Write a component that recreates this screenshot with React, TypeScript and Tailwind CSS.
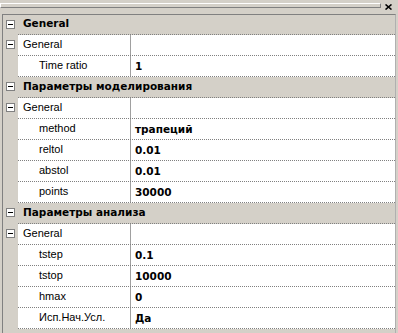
import React from "react";

type Row =
  | { kind: "category"; label: string }
  | { kind: "group"; label: string }
  | { kind: "prop"; name: string; value: string };

const rows: Row[] = [
  { kind: "category", label: "General" },
  { kind: "group", label: "General" },
  { kind: "prop", name: "Time ratio", value: "1" },
  { kind: "category", label: "Параметры моделирования" },
  { kind: "group", label: "General" },
  { kind: "prop", name: "method", value: "трапеций" },
  { kind: "prop", name: "reltol", value: "0.01" },
  { kind: "prop", name: "abstol", value: "0.01" },
  { kind: "prop", name: "points", value: "30000" },
  { kind: "category", label: "Параметры анализа" },
  { kind: "group", label: "General" },
  { kind: "prop", name: "tstep", value: "0.1" },
  { kind: "prop", name: "tstop", value: "10000" },
  { kind: "prop", name: "hmax", value: "0" },
  { kind: "prop", name: "Исп.Нач.Усл.", value: "Да" },
];

// bold text in the source is Tahoma Bold, DejaVu Sans Bold is closest in width
const boldFont = { fontFamily: '"DejaVu Sans", Verdana, sans-serif' };

function MinusBox() {
  return (
    <div className="w-[9px] h-[9px] border border-[#808080] bg-white flex items-center justify-center">
      <div className="w-[5px] h-[1px] bg-black" />
    </div>
  );
}

function PropRow({ row, first }: { row: Row; first: boolean }) {
  const h = first ? "h-[20px]" : "h-[21px]";
  if (row.kind === "category") {
    return (
      <div className={`flex ${h}`}>
        <div className="w-[15px] flex items-center justify-center pb-[2px]">
          <MinusBox />
        </div>
        <div
          className="flex-1 flex items-center pl-[5px] pb-[1px] font-bold text-[10.5px] border-b border-dotted border-[#808080]"
          style={boldFont}
        >
          {row.label}
        </div>
      </div>
    );
  }
  if (row.kind === "group") {
    return (
      <div className={`flex ${h}`}>
        <div className="w-[15px] flex items-center justify-center pb-[2px]">
          <MinusBox />
        </div>
        <div className="flex-1 flex bg-white border-b border-dotted border-[#808080]">
          <div className="w-[113px] flex items-center pl-[5px] pb-[1px] border-r border-r-solid border-[#a0a0a0]">
            {row.label}
          </div>
          <div className="flex-1" />
        </div>
      </div>
    );
  }
  return (
    <div className={`flex ${h}`}>
      <div className="w-[15px]" />
      <div className="flex-1 flex bg-white border-b border-dotted border-[#808080]">
        <div className="w-[113px] flex items-center pl-[21px] pb-[1px] border-r border-r-solid border-[#a0a0a0]">
          {row.name}
        </div>
        <div
          className="flex-1 flex items-center pl-[4px] pt-[1px] font-bold text-[10.5px]"
          style={boldFont}
        >
          {row.value}
        </div>
      </div>
    </div>
  );
}

export default function App() {
  return (
    <div
      className="w-[398px] h-[333px] bg-[#d4d0c8] overflow-hidden text-[11px] text-black"
      style={{ fontFamily: '"Liberation Sans", Arial, sans-serif' }}
    >
      <div className="h-[14px] flex items-start pt-[3px]">
        <div className="w-[381px] h-[5px] border border-t-white border-l-white border-b-[#808080] border-r-[#808080]" />
        <div className="flex-1 flex justify-center pt-[1px] pr-[2px]">
          <svg width="7" height="6" viewBox="0 0 7 6">
            <path d="M0.5 0.5 L6.5 5.5 M6.5 0.5 L0.5 5.5" stroke="black" strokeWidth="1.6" />
          </svg>
        </div>
      </div>
      <div className="ml-[2px] mr-[2px] h-[319px] border-l border-t border-r border-l-[#808080] border-t-[#808080] border-r-[#b0b0b0] flex flex-col">
        {rows.map((r, i) => (
          <PropRow key={i} row={r} first={i === 0} />
        ))}
      </div>
    </div>
  );
}
